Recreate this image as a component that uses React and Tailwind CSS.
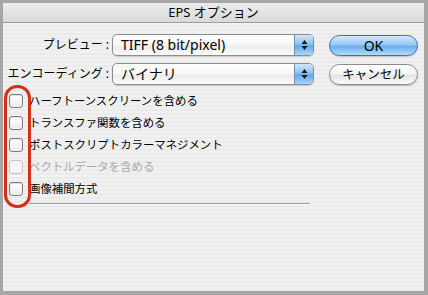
import React from 'react';

const FONT = { fontFamily: '"Noto Sans", "Noto Sans CJK JP", sans-serif' };

const OPCIONES = [
  { label: 'ハーフトーンスクリーンを含める', disabled: false },
  { label: 'トランスファ関数を含める', disabled: false },
  { label: 'ポストスクリプトカラーマネジメント', disabled: false },
  { label: 'ベクトルデータを含める', disabled: true },
  { label: '画像補間方式', disabled: false },
];

function Popup({ value }) {
  return (
    <div className="flex h-[22px] w-[202px] ml-[3px] rounded-[5px] border border-[#8d8d8d] bg-[linear-gradient(180deg,#ffffff_0%,#f6f6f6_50%,#ececec_55%,#fbfbfb_100%)] shadow-[0_1px_1px_rgba(0,0,0,0.15)] overflow-hidden">
      <span className="flex-1 pl-[8px] text-[14px] leading-[20px] text-black">{value}</span>
      <span className="flex w-[19px] items-center justify-center border-l border-[#6f8fbf] bg-[linear-gradient(180deg,#cfe6fc_0%,#8ec2f3_45%,#63a8ec_55%,#a9d6fb_100%)]">
        <svg width="7" height="12" viewBox="0 0 7 12">
          <path d="M3.5 1 L6.5 5 L0.5 5 Z" fill="#1a1a1a" />
          <path d="M3.5 11 L6.5 7 L0.5 7 Z" fill="#1a1a1a" />
        </svg>
      </span>
    </div>
  );
}

function Checkbox({ disabled }) {
  return (
    <span
      className={`h-[14px] w-[14px] rounded-[3px] border ${
        disabled
          ? 'border-[#c4c4c4] bg-[#f4f4f4]'
          : 'border-[#7d7d7d] bg-[linear-gradient(180deg,#ffffff,#ededed)] shadow-[inset_0_1px_1px_rgba(0,0,0,0.12)]'
      }`}
    />
  );
}

export default function App() {
  return (
    <div className="h-[295px] w-[428px] bg-[#a6a6a6] pt-[3px] pl-[3px] pr-[4px] pb-[4px]" style={FONT}>
      <div className="flex h-full flex-col">
        <div className="flex h-[20px] items-center justify-center border-b border-[#9c9c9c] bg-[linear-gradient(180deg,#ececec,#dadada)] text-[13px] text-black">
          EPS オプション
        </div>

        <div className="relative flex-1 bg-[repeating-linear-gradient(180deg,#f1f1f1_0px,#f1f1f1_2px,#ebebeb_2px,#ebebeb_4px)] pt-[11px]">
          <div className="flex items-center">
            <span className="w-[106px] text-right text-[12px] text-black">プレビュー :</span>
            <Popup value="TIFF (8 bit/pixel)" />
            <button className="ml-[15px] h-[21px] w-[89px] rounded-full border border-[#3f6fb5] bg-[linear-gradient(180deg,#d2e9fd_0%,#98c9f5_45%,#6aaeed_55%,#b3dcfc_100%)] text-[14px] leading-[19px] text-black shadow-[0_1px_1px_rgba(0,0,0,0.2)]">
              OK
            </button>
          </div>

          <div className="mt-[7px] flex items-center">
            <span className="w-[106px] pl-[4px] text-right text-[12px] text-black">エンコーディング :</span>
            <Popup value="バイナリ" />
            <button className="ml-[15px] h-[21px] w-[89px] rounded-full border border-[#8a8a8a] bg-[linear-gradient(180deg,#ffffff_0%,#f4f4f4_45%,#e4e4e4_55%,#fbfbfb_100%)] text-[12.5px] leading-[19px] text-black shadow-[0_1px_1px_rgba(0,0,0,0.2)]">
              キャンセル
            </button>
          </div>

          <div className="mt-[5px] flex flex-col">
            {OPCIONES.map(o => (
              <div key={o.label} className="flex h-[22px] items-center gap-[6px] pl-[6px]">
                <Checkbox disabled={o.disabled} />
                <span className={`text-[11.4px] ${o.disabled ? 'text-[#a9a9a9]' : 'text-black'}`}>{o.label}</span>
              </div>
            ))}
          </div>

          <div className="ml-[26px] mt-[3px] w-[281px] border-t border-b border-t-[#9a9a9a] border-b-[#ffffff]" />

          <div className="absolute left-[1px] top-[62px] h-[123px] w-[27px] rounded-[13px] border-[3px] border-[#d3301c]" />
        </div>
      </div>
    </div>
  );
}
